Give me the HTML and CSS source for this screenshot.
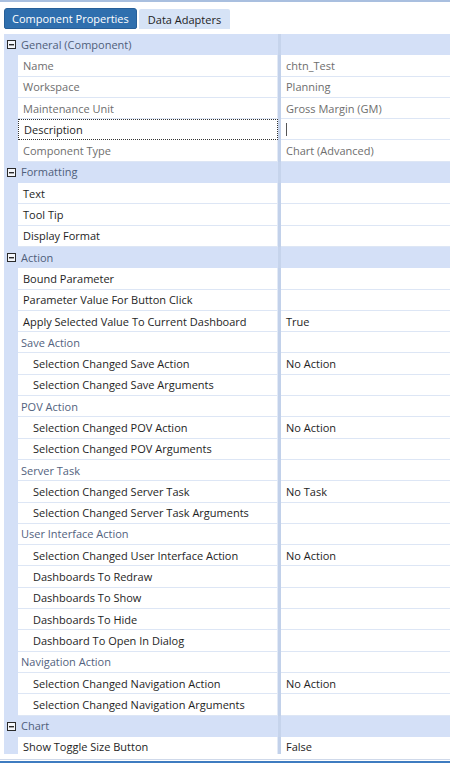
FILE: index.html
```html
<!DOCTYPE html>
<html>
<head>
<meta charset="utf-8">
<link rel="stylesheet" href="styles.css">
</head>
<body>
<div class="top-line"></div>
<div class="tabs">
  <div class="tab active">Component Properties</div>
  <div class="tab">Data Adapters</div>
</div>
<div class="grid">
  <div class="row head"><span class="gut"><svg class="minus" width="9" height="9" viewBox="0 0 9 9"><rect x="0.5" y="0.5" width="8" height="8" fill="#f4f6fa" stroke="#2b2b2b"/><rect x="2" y="4" width="5" height="1.4" fill="#2b2b2b"/></svg></span><span class="name">General (Component)</span><span class="split"></span><span class="val"></span></div>
  <div class="row ro"><span class="gut"></span><span class="name">Name</span><span class="split"></span><span class="val">chtn_Test</span></div>
  <div class="row ro"><span class="gut"></span><span class="name">Workspace</span><span class="split"></span><span class="val">Planning</span></div>
  <div class="row ro"><span class="gut"></span><span class="name">Maintenance Unit</span><span class="split"></span><span class="val">Gross Margin (GM)</span></div>
  <div class="row sel"><span class="gut"></span><span class="name">Description</span><span class="split"></span><span class="val"><span class="caret"></span></span></div>
  <div class="row ro"><span class="gut"></span><span class="name">Component Type</span><span class="split"></span><span class="val">Chart (Advanced)</span></div>

  <div class="row head"><span class="gut"><svg class="minus" width="9" height="9" viewBox="0 0 9 9"><rect x="0.5" y="0.5" width="8" height="8" fill="#f4f6fa" stroke="#2b2b2b"/><rect x="2" y="4" width="5" height="1.4" fill="#2b2b2b"/></svg></span><span class="name">Formatting</span><span class="split"></span><span class="val"></span></div>
  <div class="row"><span class="gut"></span><span class="name">Text</span><span class="split"></span><span class="val"></span></div>
  <div class="row"><span class="gut"></span><span class="name">Tool Tip</span><span class="split"></span><span class="val"></span></div>
  <div class="row"><span class="gut"></span><span class="name">Display Format</span><span class="split"></span><span class="val"></span></div>

  <div class="row head"><span class="gut"><svg class="minus" width="9" height="9" viewBox="0 0 9 9"><rect x="0.5" y="0.5" width="8" height="8" fill="#f4f6fa" stroke="#2b2b2b"/><rect x="2" y="4" width="5" height="1.4" fill="#2b2b2b"/></svg></span><span class="name">Action</span><span class="split"></span><span class="val"></span></div>
  <div class="row"><span class="gut"></span><span class="name">Bound Parameter</span><span class="split"></span><span class="val"></span></div>
  <div class="row"><span class="gut"></span><span class="name">Parameter Value For Button Click</span><span class="split"></span><span class="val"></span></div>
  <div class="row"><span class="gut"></span><span class="name">Apply Selected Value To Current Dashboard</span><span class="split"></span><span class="val">True</span></div>
  <div class="row sub"><span class="gut"></span><span class="name">Save Action</span><span class="split"></span><span class="val"></span></div>
  <div class="row ind"><span class="gut"></span><span class="name">Selection Changed Save Action</span><span class="split"></span><span class="val">No Action</span></div>
  <div class="row ind"><span class="gut"></span><span class="name">Selection Changed Save Arguments</span><span class="split"></span><span class="val"></span></div>
  <div class="row sub"><span class="gut"></span><span class="name">POV Action</span><span class="split"></span><span class="val"></span></div>
  <div class="row ind"><span class="gut"></span><span class="name">Selection Changed POV Action</span><span class="split"></span><span class="val">No Action</span></div>
  <div class="row ind"><span class="gut"></span><span class="name">Selection Changed POV Arguments</span><span class="split"></span><span class="val"></span></div>
  <div class="row sub"><span class="gut"></span><span class="name">Server Task</span><span class="split"></span><span class="val"></span></div>
  <div class="row ind"><span class="gut"></span><span class="name">Selection Changed Server Task</span><span class="split"></span><span class="val">No Task</span></div>
  <div class="row ind"><span class="gut"></span><span class="name">Selection Changed Server Task Arguments</span><span class="split"></span><span class="val"></span></div>
  <div class="row sub"><span class="gut"></span><span class="name">User Interface Action</span><span class="split"></span><span class="val"></span></div>
  <div class="row ind"><span class="gut"></span><span class="name">Selection Changed User Interface Action</span><span class="split"></span><span class="val">No Action</span></div>
  <div class="row ind"><span class="gut"></span><span class="name">Dashboards To Redraw</span><span class="split"></span><span class="val"></span></div>
  <div class="row ind"><span class="gut"></span><span class="name">Dashboards To Show</span><span class="split"></span><span class="val"></span></div>
  <div class="row ind"><span class="gut"></span><span class="name">Dashboards To Hide</span><span class="split"></span><span class="val"></span></div>
  <div class="row ind"><span class="gut"></span><span class="name">Dashboard To Open In Dialog</span><span class="split"></span><span class="val"></span></div>
  <div class="row sub"><span class="gut"></span><span class="name">Navigation Action</span><span class="split"></span><span class="val"></span></div>
  <div class="row ind"><span class="gut"></span><span class="name">Selection Changed Navigation Action</span><span class="split"></span><span class="val">No Action</span></div>
  <div class="row ind"><span class="gut"></span><span class="name">Selection Changed Navigation Arguments</span><span class="split"></span><span class="val"></span></div>

  <div class="row head"><span class="gut"><svg class="minus" width="9" height="9" viewBox="0 0 9 9"><rect x="0.5" y="0.5" width="8" height="8" fill="#f4f6fa" stroke="#2b2b2b"/><rect x="2" y="4" width="5" height="1.4" fill="#2b2b2b"/></svg></span><span class="name">Chart</span><span class="split"></span><span class="val"></span></div>
  <div class="row"><span class="gut"></span><span class="name">Show Toggle Size Button</span><span class="split"></span><span class="val">False</span></div>
</div>
<div class="bottom">
  <div class="bottom-light"></div>
  <div class="bottom-line"></div>
</div>
</body>
</html>
```

FILE: styles.css
```css
* { box-sizing: border-box; }
html, body { margin: 0; padding: 0; background: #ffffff; }
body {
  width: 450px;
  height: 763px;
  overflow: hidden;
  font-family: "Open Sans", "Noto Sans", sans-serif;
  font-size: 11px;
  color: #1e1e1e;
}
.top-line {
  height: 2px;
  background: #a9bfdf;
}
.tabs {
  display: flex;
  align-items: flex-end;
  gap: 2px;
  padding: 6px 0 0 4px;
  height: 27px;
}
.tab {
  height: 20px;
  padding: 0 9px;
  display: flex;
  align-items: center;
  background: #d6e3f6;
  color: #1e1e1e;
  border-radius: 2px 2px 0 0;
}
.tab.active {
  height: 21px;
  background: #2f6fae;
  color: #ffffff;
  border: 1px solid #275f98;
  border-radius: 3px 3px 2px 2px;
  padding: 0 7px;
}
.grid {
  margin-top: 5px;
  margin-left: 4px;
  height: 720px;
  overflow: hidden;
  display: flex;
  flex-direction: column;
}
.row {
  display: flex;
  height: 21.3px;
  flex: none;
}
.gut {
  width: 14px;
  flex: none;
  background: #d4e0f7;
  display: flex;
  align-items: center;
  justify-content: center;
}
.name {
  width: 260px;
  flex: none;
  background: #ffffff;
  border-bottom: 1px solid #dde6f5;
  border-right: 1px solid #e3eaf6;
  padding-left: 5px;
  display: flex;
  align-items: center;
  white-space: nowrap;
  overflow: hidden;
}
.split {
  width: 3px;
  flex: none;
  background: #c2d1ea;
}
.val {
  flex: 1;
  background: #ffffff;
  border-bottom: 1px solid #dde6f5;
  padding-left: 5px;
  display: flex;
  align-items: center;
  white-space: nowrap;
}
.row.ro .name, .row.ro .val { color: #6e6e6e; }
.row.head .name, .row.head .val {
  background: #d4e0f7;
  border-bottom: 1px solid #d4e0f7;
  border-right: none;
  padding-left: 3px;
  color: #4f5e7a;
}
.row.head .split { background: #c6d4ec; }
.minus { display: block; margin-left: 0; }
.row.sub .name { padding-left: 3px; color: #52627e; }
.row.ind .name { padding-left: 15px; }
.row.sel .name {
  border: 1px dotted #333333;
}
.caret {
  display: block;
  width: 1px;
  height: 13px;
  background: #555555;
}
.bottom {
  margin-top: 4px;
  display: flex;
  flex-direction: column;
}
.bottom-light {
  height: 1px;
  background: #cfd9ea;
  margin-top: 1px;
}
.bottom-line {
  height: 2px;
  margin-top: 1px;
  background: #3f7cc0;
}
```
